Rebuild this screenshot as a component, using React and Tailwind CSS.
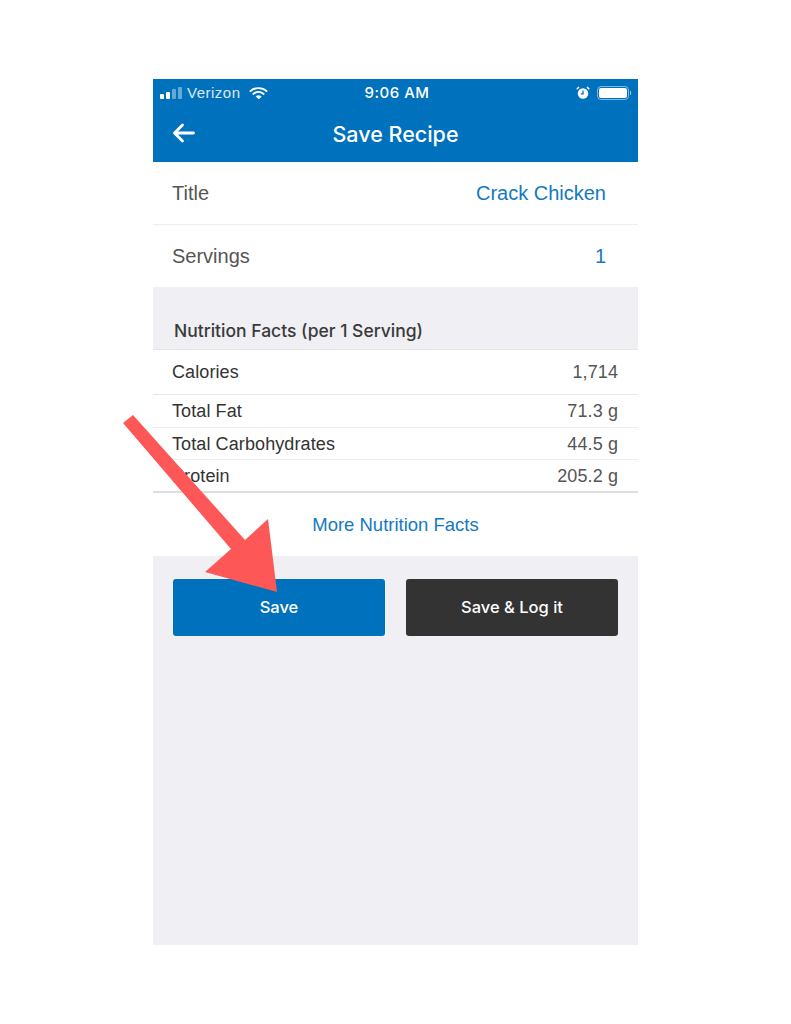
const font = { fontFamily: '"Liberation Sans", Arial, sans-serif' }
const inter = 'font-[Inter,sans-serif] font-medium'

function StatusBar() {
  return (
    <div className="flex h-[27px] items-center justify-between pl-[7px] pr-[7px] pt-[1px] text-white">
      <div className="flex w-[150px] items-center">
        <div className="flex items-end gap-[2px]">
          <span className="h-[5px] w-[4px] rounded-[1px] bg-white" />
          <span className="h-[7px] w-[4px] rounded-[1px] bg-white" />
          <span className="h-[10px] w-[4px] rounded-[1px] bg-white/40" />
          <span className="h-[12px] w-[4px] rounded-[1px] bg-white/40" />
        </div>
        <span className="ml-[5px] text-[15px] tracking-[0.5px] text-white/85">Verizon</span>
        <svg viewBox="0 0 20 14" className="ml-[8px] h-[14px] w-[19px]" fill="none" stroke="white" strokeLinecap="round">
          <path d="M1.5 5 C6 0.8 14 0.8 18.5 5" strokeWidth="2" />
          <path d="M4.6 8 C7.8 5.2 12.2 5.2 15.4 8" strokeWidth="2" />
          <path d="M10 13 L7.6 10.6 C9 9.6 11 9.6 12.4 10.6 Z" fill="white" strokeWidth="1" />
        </svg>
      </div>
      <span className={`${inter} ml-[3px] text-[15px] tracking-[0.5px]`}>9:06 AM</span>
      <div className="flex w-[150px] items-center justify-end">
        <svg viewBox="0 0 14 14" className="h-[14px] w-[14px]">
          <circle cx="7" cy="7.5" r="5.2" fill="white" />
          <path d="M7 4.5 V7.8 H4.8" stroke="#0071bc" strokeWidth="1.3" fill="none" />
          <path d="M0.8 3.2 L3 1 M13.2 3.2 L11 1" stroke="white" strokeWidth="1.6" />
        </svg>
        <div className="ml-[7px] flex h-[14px] w-[32px] items-center rounded-[4px] border border-white/50 p-[1px]">
          <div className="h-full w-full rounded-[2px] bg-white" />
        </div>
        <span className="ml-[1px] h-[4px] w-[1px] bg-white/60" />
      </div>
    </div>
  )
}

function BigRow({ label, value, border }) {
  return (
    <div className={`flex items-center justify-between pl-[19px] pr-[32px] text-[20px] ${border ? 'h-[63px] border-b border-[#ececec]' : 'h-[62px]'}`}>
      <span className="text-[#555]">{label}</span>
      <span className="text-[#1379bf]">{value}</span>
    </div>
  )
}

function FactRow({ label, value, className }) {
  return (
    <div className={`flex items-center justify-between pl-[19px] pr-[20px] pt-[1px] text-[18px] tracking-[0.1px] ${className}`}>
      <span className="text-[#333]">{label}</span>
      <span className="text-[#555]">{value}</span>
    </div>
  )
}

function Arrow() {
  return (
    <svg viewBox="0 0 791 1024" className="pointer-events-none absolute left-0 top-0 h-[1024px] w-[791px]">
      <path
        d="M123 423 L133 415 L245 540 L268 519 L277 592 L205 572 L231 549 Z"
        fill="#fe5757"
      />
    </svg>
  )
}

export default function App() {
  return (
    <div className="relative h-[1024px] w-[791px] bg-white pl-[153px] pt-[79px]" style={font}>
      <div className="flex h-[866px] w-[485px] flex-col bg-[#efeff4]">
        <header className="h-[83px] bg-[#0071bc]">
          <StatusBar />
          <div className="relative flex h-[56px] items-center justify-center">
            <svg viewBox="0 0 24 20" className="absolute left-[19px] top-[17px] h-[20px] w-[24px]" fill="none" stroke="white" strokeWidth="2.8" strokeLinecap="round" strokeLinejoin="round">
              <path d="M21.5 10 H3 M10.5 2 L2.5 10 L10.5 18" />
            </svg>
            <h1 className={`${inter} text-[21.5px] text-white`}>Save Recipe</h1>
          </div>
        </header>

        <div className="bg-white">
          <BigRow label="Title" value="Crack Chicken" border />
          <BigRow label="Servings" value="1" />
        </div>

        <div className={`${inter} flex h-[62px] items-end pb-[5px] pl-[21px] text-[17.5px] text-[#3a3a3a]`}>
          Nutrition Facts (per 1 Serving)
        </div>

        <div className="border-t border-[#e4e4e4] bg-white">
          <FactRow label="Calories" value="1,714" className="h-[45px] border-b border-[#e8e8e8]" />
          <FactRow label="Total Fat" value="71.3 g" className="h-[33px] border-b border-[#efefef]" />
          <FactRow label="Total Carbohydrates" value="44.5 g" className="h-[32px] border-b border-[#efefef]" />
          <FactRow label="Protein" value="205.2 g" className="h-[33px] border-b-2 border-[#dedede]" />
          <div className="flex h-[63px] items-center justify-center text-[18.5px] text-[#1379bf]">
            More Nutrition Facts
          </div>
        </div>

        <div className="flex gap-[21px] px-[20px] pt-[23px]">
          <button className={`${inter} h-[57px] flex-1 rounded-[3px] bg-[#0071bc] text-[16.5px] text-white`}>
            Save
          </button>
          <button className={`${inter} h-[57px] flex-1 rounded-[3px] bg-[#333333] text-[16.5px] text-white`}>
            Save &amp; Log it
          </button>
        </div>
      </div>
      <Arrow />
    </div>
  )
}
